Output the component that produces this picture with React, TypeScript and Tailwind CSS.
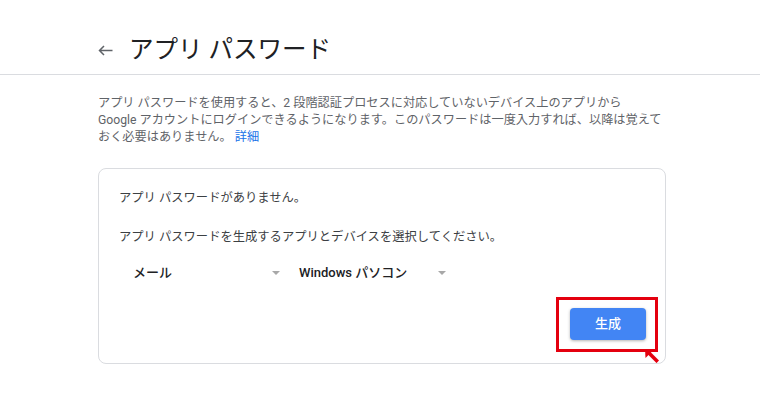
import React from "react";

const FONT = 'Roboto, "Noto Sans CJK JP", "Noto Sans", sans-serif';

function Caret() {
  return (
    <svg width="8" height="4" viewBox="0 0 8 4" className="shrink-0">
      <polygon points="0,0 8,0 4,4" fill="#a8a8a8" />
    </svg>
  );
}

function SelectBox({ label }: { label: string }) {
  return (
    <div className="w-[166px] h-[32px] flex items-center justify-between pl-[14px] pr-[5px]">
      <span className="text-[13px] font-medium text-[#202124] leading-[18px]">{label}</span>
      <Caret />
    </div>
  );
}

export default function App() {
  return (
    <div className="w-[760px] h-[400px] bg-white overflow-hidden" style={{ fontFamily: FONT }}>
      <header className="h-[75px] border-b border-[#dadce0] pt-[36px] pl-[98px]">
        <div className="flex items-center h-[28px]">
          <svg width="15" height="11" viewBox="0 0 15 11" className="shrink-0">
            <path d="M14.5 5.5H1.5M6 1L1.5 5.5L6 10" fill="none" stroke="#5f6368" strokeWidth="1.5" />
          </svg>
          <h1 className="ml-[16px] text-[24.5px] leading-[28px] font-normal text-[#202124]">アプリ パスワード</h1>
        </div>
      </header>

      <main className="pl-[98px] w-[666px]">
        <p className="mt-[20px] text-[12.2px] leading-[17px] text-[#5f6368] whitespace-nowrap">
          アプリ パスワードを使用すると、2 段階認証プロセスに対応していないデバイス上のアプリから
          <br />
          Google アカウントにログインできるようになります。このパスワードは一度入力すれば、以降は覚えて
          <br />
          おく必要はありません。 <span className="text-[#1a73e8]">詳細</span>
        </p>

        <section className="mt-[22px] border border-[#dadce0] rounded-[8px] pl-[20px] pr-[7px] pt-[20px] pb-[11px]">
          <p className="text-[12.3px] leading-[18px] text-[#3c4043]">アプリ パスワードがありません。</p>
          <p className="mt-[21px] text-[12.3px] leading-[18px] text-[#3c4043]">
            アプリ パスワードを生成するアプリとデバイスを選択してください。
          </p>
          <div className="mt-[11px] flex">
            <SelectBox label="メール" />
            <SelectBox label="Windows パソコン" />
          </div>
          <div className="mt-[8px] flex justify-end">
            <div className="relative border-[3px] border-[#e4000f] pl-[11px] pr-[9px] pt-[8px] pb-[9px]">
              <button className="w-[76px] h-[32px] rounded-[4px] bg-[#4285f4] text-white text-[13px] font-medium shadow-[0_1px_3px_rgba(0,0,0,0.3)] flex items-center justify-center">
                生成
              </button>
              <svg
                width="14"
                height="14"
                viewBox="0 0 14 14"
                className="absolute top-full left-[86px]"
              >
                <polygon points="0,0 9,0.5 0.5,9" fill="#e4000f" />
                <line x1="3" y1="3" x2="12.8" y2="12.8" stroke="#e4000f" strokeWidth="3.6" />
              </svg>
            </div>
          </div>
        </section>
      </main>
    </div>
  );
}
